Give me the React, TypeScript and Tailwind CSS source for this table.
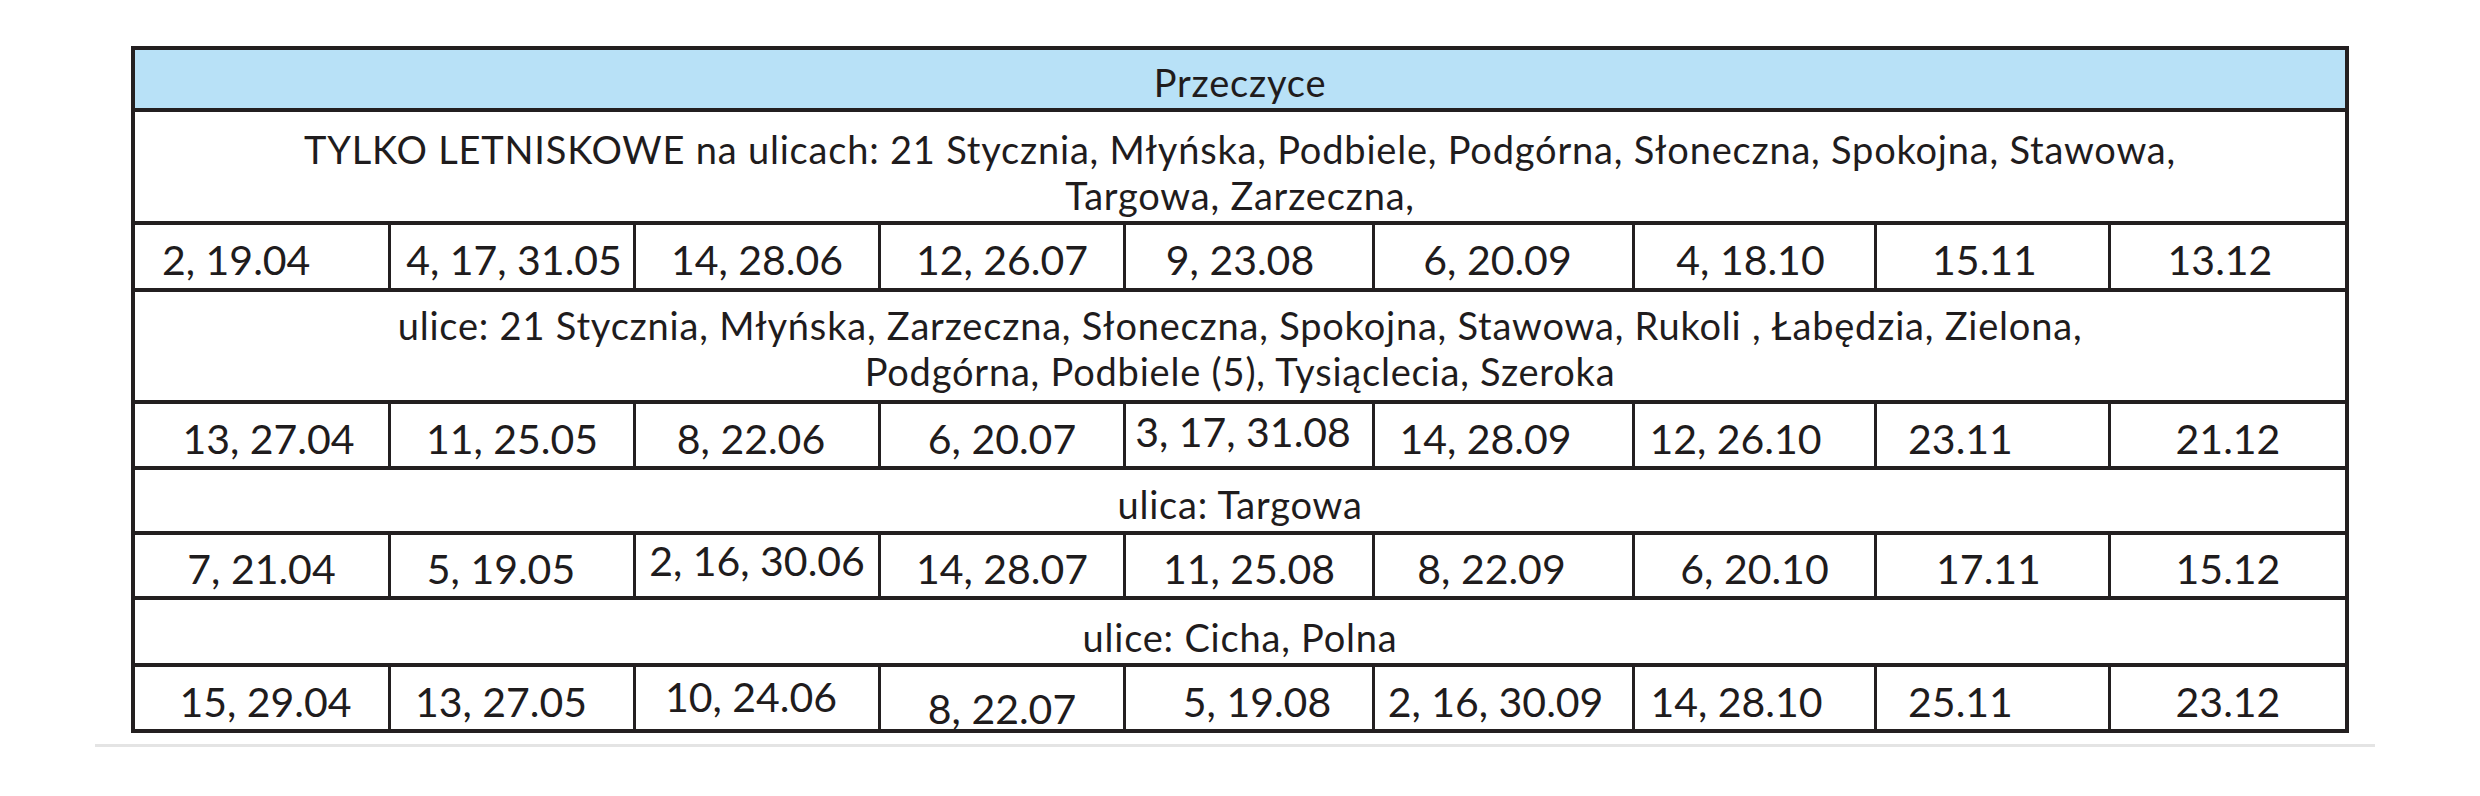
import React from "react";

type DateCell = { t: string; c?: string };

type Section = {
  streets: string[];
  tall?: boolean;
  streetPad: string;
  dateRowH: string;
  streetRowH: string;
  dates: DateCell[];
};

// widths include each cell's right border (last has none)
const colWidths = [
  "w-[256px]",
  "w-[245px]",
  "w-[245px]",
  "w-[245px]",
  "w-[249px]",
  "w-[260px]",
  "w-[242px]",
  "w-[234px]",
  "w-[234px]",
];

const sections: Section[] = [
  {
    streets: [
      "TYLKO LETNISKOWE na ulicach: 21 Stycznia, Młyńska, Podbiele, Podgórna, Słoneczna, Spokojna, Stawowa,",
      "Targowa, Zarzeczna,",
    ],
    tall: true,
    streetPad: "pt-[14px]",
    streetRowH: "h-[113px]",
    dateRowH: "h-[67px]",
    dates: [
      { t: "2, 19.04", c: "justify-start pl-[27px]" },
      { t: "4, 17, 31.05", c: "pl-[4px]" },
      { t: "14, 28.06" },
      { t: "12, 26.07" },
      { t: "9, 23.08", c: "pr-[18px]" },
      { t: "6, 20.09", c: "pr-[12px]" },
      { t: "4, 18.10", c: "pr-[8px]" },
      { t: "15.11", c: "pr-[16px]" },
      { t: "13.12", c: "pr-[16px]" },
    ],
  },
  {
    streets: [
      "ulice: 21 Stycznia, Młyńska, Zarzeczna, Słoneczna, Spokojna, Stawowa, Rukoli , Łabędzia, Zielona,",
      "Podgórna, Podbiele (5), Tysiąclecia, Szeroka",
    ],
    tall: true,
    streetPad: "pt-[10px]",
    streetRowH: "h-[112px]",
    dateRowH: "h-[66px]",
    dates: [
      { t: "13, 27.04", c: "pl-[14px]" },
      { t: "11, 25.05" },
      { t: "8, 22.06", c: "pr-[12px]" },
      { t: "6, 20.07" },
      { t: "3, 17, 31.08", c: "pr-[12px] pb-[14px]" },
      { t: "14, 28.09", c: "pr-[36px]" },
      { t: "12, 26.10", c: "pr-[38px]" },
      { t: "23.11", c: "pr-[64px]" },
      { t: "21.12" },
    ],
  },
  {
    streets: ["ulica: Targowa"],
    streetPad: "pt-[6px]",
    streetRowH: "h-[65px]",
    dateRowH: "h-[65px]",
    dates: [
      { t: "7, 21.04" },
      { t: "5, 19.05", c: "pr-[22px]" },
      { t: "2, 16, 30.06", c: "pb-[16px]" },
      { t: "14, 28.07" },
      { t: "11, 25.08" },
      { t: "8, 22.09", c: "pr-[24px]" },
      { t: "6, 20.10" },
      { t: "17.11", c: "pr-[8px]" },
      { t: "15.12" },
    ],
  },
  {
    streets: ["ulice: Cicha, Polna"],
    streetPad: "pt-[10px]",
    streetRowH: "h-[67px]",
    dateRowH: "h-[66px]",
    dates: [
      { t: "15, 29.04", c: "pl-[8px]" },
      { t: "13, 27.05", c: "pr-[22px]" },
      { t: "10, 24.06", c: "pr-[12px] pb-[10px]" },
      { t: "8, 22.07", c: "pt-[14px]" },
      { t: "5, 19.08", c: "pl-[16px]" },
      { t: "2, 16, 30.09", c: "pr-[16px]" },
      { t: "14, 28.10", c: "pr-[36px]" },
      { t: "25.11", c: "pr-[64px]" },
      { t: "23.12" },
    ],
  },
];

function DatesRow({ cells, h }: { cells: DateCell[]; h: string }) {
  return (
    <div className={`flex ${h} border-b-[4px] border-[#231f20]`}>
      {cells.map((cell, i) => (
        <div
          key={i}
          className={`flex items-center justify-center ${colWidths[i]} ${
            i < cells.length - 1 ? "border-r-[3px] border-[#231f20]" : ""
          } ${cell.c ?? ""}`}
        >
          <span className="translate-y-[3px] text-[41px] leading-none whitespace-nowrap">{cell.t}</span>
        </div>
      ))}
    </div>
  );
}

export default function App() {
  return (
    <div className="min-h-[796px] w-[2480px] bg-white font-['Lato','Open_Sans',sans-serif] text-[#1f1c1d]">
      <div className="ml-[95px] w-[2280px] pt-[46px] pb-[11px] border-b-[3px] border-[#e4e4e4]">
        <div className="ml-[36px] w-[2218px] border-x-[4px] border-t-[4px] border-[#231f20]">
          <div className="flex h-[62px] items-center justify-center border-b-[4px] border-[#231f20] bg-[#b8e1f7] pt-[6px]">
            <span className="text-[38px] leading-none tracking-[0.8px]">Przeczyce</span>
          </div>
          {sections.map((s, si) => (
            <div key={si}>
              <div
                className={`flex flex-col items-center ${s.tall ? "justify-start" : "justify-center"} ${s.streetRowH} ${s.streetPad} border-b-[4px] border-[#231f20] text-center text-[38px] leading-[46px] tracking-[0.8px]`}
              >
                {s.streets.map((line, li) => (
                  <div key={li} className="whitespace-nowrap">
                    {line}
                  </div>
                ))}
              </div>
              <DatesRow cells={s.dates} h={s.dateRowH} />
            </div>
          ))}
        </div>
      </div>
    </div>
  );
}
